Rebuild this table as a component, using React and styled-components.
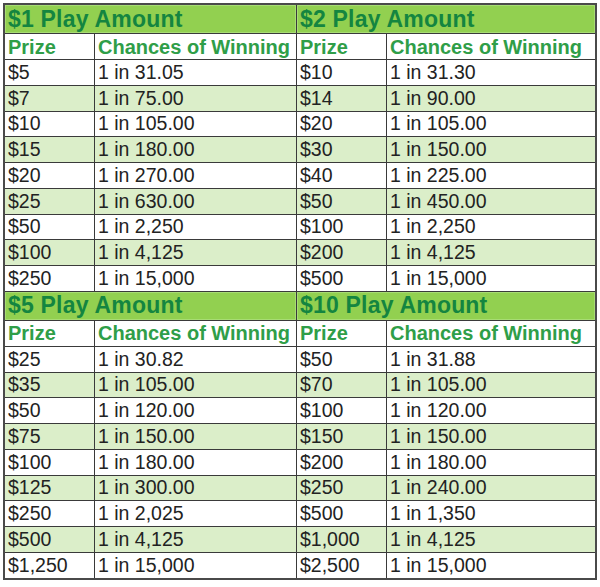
import React from "react";
import styled, { createGlobalStyle } from "styled-components";

const Global = createGlobalStyle`
  html, body { margin: 0; padding: 0; background: #ffffff; }
  body { font-family: "Liberation Sans", Arial, sans-serif; }
`;

const Page = styled.div`
  padding: 3px 0 0 3px;
`;

const Grid = styled.div`
  display: grid;
  width: max-content;
  grid-template-columns: 89px 201px 89px 208px;
  grid-template-rows: 28px 25px repeat(9, 24.75px) 28px 25px repeat(9, 24.75px);
  gap: 1px;
  background: #3a3a3a;
  border: 2px solid #4a4a4a;
`;

const SectionHead = styled.div`
  grid-column: span 2;
  display: flex;
  align-items: center;
  padding-left: 3px;
  background: #92d050;
  box-shadow: inset 0 0 0 1px #a8dc74;
  color: #148540;
  font-weight: 700;
  font-size: 23px;
  letter-spacing: 0.2px;
  white-space: nowrap;
`;

const ColHead = styled.div`
  display: flex;
  align-items: center;
  padding: 1px 0 0 3px;
  background: #ffffff;
  color: #2f9e48;
  font-weight: 700;
  font-size: 20px;
  white-space: nowrap;
  overflow: hidden;
`;

const Cell = styled.div`
  display: flex;
  align-items: center;
  padding-left: 3px;
  background: ${(p) => (p.$alt ? "#dbeec9" : "#ffffff")};
  color: #222222;
  font-size: 19.5px;
  white-space: nowrap;
`;

const Row = styled.div`
  display: contents;
`;

const sections = [
  [
    {
      title: "$1 Play Amount",
      rows: [
        ["$5", "1 in 31.05"],
        ["$7", "1 in 75.00"],
        ["$10", "1 in 105.00"],
        ["$15", "1 in 180.00"],
        ["$20", "1 in 270.00"],
        ["$25", "1 in 630.00"],
        ["$50", "1 in 2,250"],
        ["$100", "1 in 4,125"],
        ["$250", "1 in 15,000"],
      ],
    },
    {
      title: "$2 Play Amount",
      rows: [
        ["$10", "1 in 31.30"],
        ["$14", "1 in 90.00"],
        ["$20", "1 in 105.00"],
        ["$30", "1 in 150.00"],
        ["$40", "1 in 225.00"],
        ["$50", "1 in 450.00"],
        ["$100", "1 in 2,250"],
        ["$200", "1 in 4,125"],
        ["$500", "1 in 15,000"],
      ],
    },
  ],
  [
    {
      title: "$5 Play Amount",
      rows: [
        ["$25", "1 in 30.82"],
        ["$35", "1 in 105.00"],
        ["$50", "1 in 120.00"],
        ["$75", "1 in 150.00"],
        ["$100", "1 in 180.00"],
        ["$125", "1 in 300.00"],
        ["$250", "1 in 2,025"],
        ["$500", "1 in 4,125"],
        ["$1,250", "1 in 15,000"],
      ],
    },
    {
      title: "$10 Play Amount",
      rows: [
        ["$50", "1 in 31.88"],
        ["$70", "1 in 105.00"],
        ["$100", "1 in 120.00"],
        ["$150", "1 in 150.00"],
        ["$200", "1 in 180.00"],
        ["$250", "1 in 240.00"],
        ["$500", "1 in 1,350"],
        ["$1,000", "1 in 4,125"],
        ["$2,500", "1 in 15,000"],
      ],
    },
  ],
];

export default function App() {
  return (
    <Page>
      <Global />
      <Grid>
        {sections.map(([left, right], si) => (
          <React.Fragment key={si}>
            <Row>
              <SectionHead>{left.title}</SectionHead>
              <SectionHead>{right.title}</SectionHead>
            </Row>
            <Row>
              <ColHead>Prize</ColHead>
              <ColHead>Chances of Winning</ColHead>
              <ColHead>Prize</ColHead>
              <ColHead>Chances of Winning</ColHead>
            </Row>
            {left.rows.map((lr, i) => {
              const rr = right.rows[i];
              const alt = i % 2 === 1;
              return (
                <Row key={i}>
                  <Cell $alt={alt}>{lr[0]}</Cell>
                  <Cell $alt={alt}>{lr[1]}</Cell>
                  <Cell $alt={alt}>{rr[0]}</Cell>
                  <Cell $alt={alt}>{rr[1]}</Cell>
                </Row>
              );
            })}
          </React.Fragment>
        ))}
      </Grid>
    </Page>
  );
}
